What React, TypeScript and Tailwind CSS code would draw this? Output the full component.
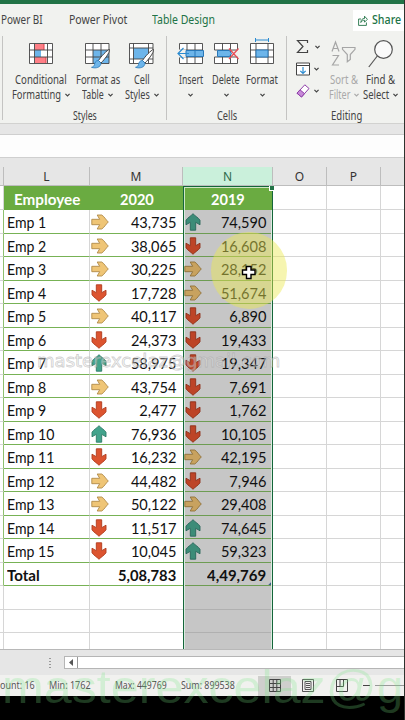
import { useLayoutEffect, useRef, useState, type ReactNode } from "react";

/* One line of text squeezed or stretched to an exact width. */
function Fit({ w, className = "", children }: { w: number; className?: string; children: ReactNode }) {
  const ref = useRef<HTMLSpanElement>(null);
  const [scale, setScale] = useState(1);
  useLayoutEffect(() => {
    if (ref.current) setScale(w / ref.current.offsetWidth);
  }, [w]);
  return (
    <span className={"inline-block shrink-0 whitespace-nowrap " + className} style={{ width: w }}>
      <span ref={ref} className="inline-block origin-left" style={{ transform: `scaleX(${scale})` }}>
        {children}
      </span>
    </span>
  );
}

function Chevron({ dim = false }: { dim?: boolean }) {
  return (
    <svg width="5" height="4" viewBox="0 0 5 4" fill="none" stroke={dim ? "#a9a9a9" : "#444"} strokeWidth="1.2">
      <path d="M0.4 0.8 2.5 2.9 4.6 0.8" />
    </svg>
  );
}

function CondIcon() {
  return (
    <svg width="24" height="32" viewBox="0 0 24 32">
      <rect x="0.5" y="5.5" width="23" height="20" fill="#fff" />
      <path d="M6 6h9v6H6zM6 19h11v6H6z" fill="#ff7f86" />
      <path d="M6 12h6v7H6z" fill="#6db5ea" />
      <path d="M15 6v6M17 19v6" stroke="#d9434c" />
      <path d="M.5 5.5h23v20H.5zM5.5 5.5v20M18.500 5.5v20M.5 12h23M.5 19h23" fill="none" stroke="#444" strokeWidth=".9" />
    </svg>
  );
}

function Brush() {
  return (
    <g>
      <path d="M24.500 11.500C22 12 16 18.500 13.500 22.500L16 25C19.500 21.500 25 14.500 24.500 11.500Z" fill="#fff" stroke="#444" />
      <path d="M13.500 22.500c-3 0-3.500 2-4 4-.4 1.500-1.500 2.500-3 2.800 4 1.500 9.500.2 9.500-4.300z" fill="#6db5ea" stroke="#2a78b8" strokeWidth=".8" />
    </g>
  );
}

function TableIcon() {
  return (
    <svg width="26" height="32" viewBox="0 0 26 32">
      <rect x=".5" y="5.5" width="23" height="20" fill="#fff" />
      <path d="M8 12h16v13.500H8z" fill="#6db5ea" />
      <path d="M.5 5.5h23.500v20H.5zM8 5.500v20M16 5.500v20M.5 12H24M.5 19H24" fill="none" stroke="#444" strokeWidth=".9" />
      <Brush />
    </svg>
  );
}

function CellStylesIcon() {
  return (
    <svg width="26" height="32" viewBox="0 0 26 32">
      <rect x=".5" y="5.5" width="23" height="20" fill="#fff" />
      <path d="M4.500 10h15v11h-15z" fill="#6db5ea" />
      <path d="M.5 5.500H24v20H.5zM4.500 5.500v20M19.500 5.500v20M.5 10H24M.5 21H24" fill="none" stroke="#444" strokeWidth=".9" />
      <Brush />
    </svg>
  );
}

function InsertIcon() {
  return (
    <svg width="27" height="32" viewBox="0 0 27 32">
      <path d="M2.500 5.500h23v20h-23zM10 5.500v20M18 5.500v20M2.500 12h23M2.500 19h23" fill="#fff" stroke="#444" strokeWidth=".9" />
      <path d="M0 11.500h9v8H0z" fill="#f1f2ef" />
      <path d="M9 12.500h17.500v6H9z" fill="#6db5ea" stroke="#2a78b8" />
      <path d="M18 12.500v6" stroke="#2a78b8" />
      <path d="M12 15.500H1M6.500 10l-5.500 5.500L6.500 21" fill="none" stroke="#2a8bd0" strokeWidth="1.200" />
    </svg>
  );
}

function DeleteIcon() {
  return (
    <svg width="25" height="32" viewBox="0 0 25 32">
      <path d="M.5 12V5.500h23V12M.5 19v6.500h23V19M8.500 5.500v20M16.500 5.500v20M.5 12h23M.5 19h23" fill="#fff" stroke="#444" strokeWidth=".9" />
      <path d="M3.500 12.500h12l2 3-2 3h-12z" fill="#6db5ea" stroke="#2a78b8" />
      <path d="M15 10.500l9.500 10.500M24.500 10.500L15 21" stroke="#e84e57" strokeWidth="1.300" />
    </svg>
  );
}

function FormatIcon() {
  return (
    <svg width="24" height="32" viewBox="0 0 24 32">
      <path d="M5.500 2h13M5.500 0v4M18.500 0v4" stroke="#2a8bd0" fill="none" />
      <path d="M.5 5.500h23v20H.5zM6 5.500v20M18 5.500v20M.5 12h23M.5 19h23" fill="#fff" stroke="#444" strokeWidth=".9" />
      <path d="M6 12h12v7H6z" fill="#6db5ea" stroke="#2a78b8" />
    </svg>
  );
}

function SortIcon() {
  return (
    <svg width="25" height="32" viewBox="0 0 25 32" fill="none" stroke="#a6a6a6" strokeWidth="1.200">
      <path d="M1 13.500 4.500 4 8 13.500M2.200 10.500h4.600M1.500 17.500h6L1.500 27h6.500" />
      <path d="M11.500 9.500h12.500v1.800l-4.700 5.200v5l-3 2.200v-7.200l-4.800-5.200z" />
    </svg>
  );
}

function FindIcon() {
  return (
    <svg width="26" height="32" viewBox="0 0 26 32" fill="none" stroke="#555" strokeWidth="1.200">
      <circle cx="15.500" cy="11.500" r="8.800" fill="#fafafa" />
      <path d="M9.300 18 .8 29" />
    </svg>
  );
}

interface ToolProps {
  box: string;
  icon: ReactNode;
  top: [string, number];
  bottom?: [string, number];
  dim?: boolean;
}

function Tool({ box, icon, top, bottom, dim = false }: ToolProps) {
  return (
    <div className={"flex shrink-0 flex-col items-center pt-[2px] " + box + (dim ? " text-[#a9a9a9]" : "")}>
      {icon}
      <div className="mt-[2px] flex h-[15px] items-center">
        <Fit w={top[1]}>{top[0]}</Fit>
      </div>
      <div className="flex h-[15px] items-center gap-[4px]">
        {bottom && <Fit w={bottom[1]}>{bottom[0]}</Fit>}
        <Chevron dim={dim} />
      </div>
    </div>
  );
}

function Ribbon() {
  return (
    <div className="flex h-[84px] text-[12px] leading-[15px] text-[#444]">
      <div className="ml-[2px] flex w-[165px] flex-col border-x border-[#c4c4c2]">
        <div className="flex h-[72px] shrink-0 pl-[5px]">
          <Tool box="w-[66px]" icon={<CondIcon />} top={["Conditional", 52]} bottom={["Formatting", 49]} />
          <Tool box="w-[47px]" icon={<TableIcon />} top={["Format as", 44]} bottom={["Table", 22]} />
          <Tool box="w-[41px]" icon={<CellStylesIcon />} top={["Cell", 16]} bottom={["Styles", 25]} />
        </div>
        <div className="flex pl-[70px]"><Fit w={24}>Styles</Fit></div>
      </div>
      <div className="flex w-[120px] flex-col border-r border-[#c4c4c2]">
        <div className="flex h-[72px] shrink-0 pl-[6px]">
          <Tool box="w-[35px]" icon={<InsertIcon />} top={["Insert", 24]} />
          <Tool box="w-[36px]" icon={<DeleteIcon />} top={["Delete", 28]} />
          <Tool box="w-[36px]" icon={<FormatIcon />} top={["Format", 32]} />
        </div>
        <div className="flex pl-[50px]"><Fit w={20}>Cells</Fit></div>
      </div>
      <div className="flex w-[117px] flex-col">
        <div className="flex h-[72px] shrink-0 pl-[9px]">
          <div className="flex w-[29px] shrink-0 flex-col gap-[5px] pt-[2px]">
            <div className="flex h-[17px] items-center gap-[6px]">
              <svg width="13" height="15" viewBox="0 0 13 15" fill="none" stroke="#444" strokeWidth="1.200">
                <path d="M11.500 4V1.500H1.500L7 7.500l-5.500 6h10V11" />
              </svg>
              <Chevron />
            </div>
            <div className="flex h-[17px] items-center gap-[4px]">
              <svg width="14" height="14" viewBox="0 0 14 14" fill="#fff" stroke="#444">
                <path d="M.5 1h13v12H.5zM.5 3.500h13" />
                <path d="M7 5v6.500M4.300 8.800 7 11.500l2.700-2.700" fill="none" stroke="#2a8bd0" strokeWidth="1.200" />
              </svg>
              <Chevron />
            </div>
            <div className="flex h-[17px] items-center gap-[4px]">
              <svg width="14" height="14" viewBox="0 0 14 14" stroke="#8f3fa8">
                <path d="M8.800.8 13 4.500 5.500 13 1 9.200z" fill="#fff" />
                <path d="M4 5.800 8.500 9.600 5.500 13 1 9.200z" fill="#c78ad8" />
              </svg>
              <Chevron />
            </div>
          </div>
          <Tool box="w-[37px]" icon={<SortIcon />} top={["Sort &", 28]} bottom={["Filter", 21]} dim />
          <Tool box="w-[37px]" icon={<FindIcon />} top={["Find &", 29]} bottom={["Select", 26]} />
        </div>
        <div className="flex pl-[44px]"><Fit w={31}>Editing</Fit></div>
      </div>
    </div>
  );
}

type Dir = "up" | "down" | "side";

const turn: Record<Dir, string> = {
  up: "rotate(0 9 9)",
  down: "rotate(180 9 9)",
  side: "rotate(90 9 9)",
};
const fills: Record<Dir, [string, string]> = {
  up: ["#43a38c", "#2c7a66"],
  down: ["#dc5430", "#b03c1e"],
  side: ["#efc576", "#b08a48"],
};
const shaded: Record<Dir, [string, string]> = {
  up: ["#3c8c78", "#28675a"],
  down: ["#bd4427", "#8f3018"],
  side: ["#c8a25f", "#8f7038"],
};

function Arrow({ dir, dark = false }: { dir: Dir; dark?: boolean }) {
  const [fill, stroke] = (dark ? shaded : fills)[dir];
  return (
    <svg width="18" height="18" viewBox="0 0 18 18" className={"shrink-0 " + (dark ? "-ml-px" : dir === "side" ? "ml-px" : "")}>
      <path
        transform={turn[dir]}
        d="M9 .7C11 3 14.800 5 16 7.300V11.800L11.700 9.300V17.200H6.300V9.300L2 11.800V7.300C3.200 5 7 3 9 .7Z"
        fill={fill}
        stroke={stroke}
        strokeWidth=".9"
        strokeLinejoin="round"
      />
    </svg>
  );
}

const rows: [string, Dir, string, Dir, string][] = [
  ["Emp 1", "side", "43,735", "up", "74,590"],
  ["Emp 2", "side", "38,065", "down", "16,608"],
  ["Emp 3", "side", "30,225", "side", "28,152"],
  ["Emp 4", "down", "17,728", "side", "51,674"],
  ["Emp 5", "side", "40,117", "down", "6,890"],
  ["Emp 6", "down", "24,373", "down", "19,433"],
  ["Emp 7", "up", "58,975", "down", "19,347"],
  ["Emp 8", "side", "43,754", "down", "7,691"],
  ["Emp 9", "down", "2,477", "down", "1,762"],
  ["Emp 10", "up", "76,936", "down", "10,105"],
  ["Emp 11", "down", "16,232", "side", "42,195"],
  ["Emp 12", "side", "44,482", "down", "7,946"],
  ["Emp 13", "side", "50,122", "side", "29,408"],
  ["Emp 14", "down", "11,517", "up", "74,645"],
  ["Emp 15", "down", "10,045", "up", "59,323"],
];

const cols = "grid shrink-0 grid-cols-[4px_86px_93px_90px_54px_54px_24px] grid-rows-[100%]";

function Num({ children }: { children: string }) {
  return <span className="ml-auto inline-block origin-right scale-x-[0.94]">{children}</span>;
}

function Blank({ last = false }: { last?: boolean }) {
  return <div className={"border-b border-[#d6d6d6] " + (last ? "" : "border-r")} />;
}

/* Cell of the selected column: green frame, a hairline of white, grey fill. */
function Selected({ children }: { children: ReactNode }) {
  return <div className="flex border-x border-[#14663a] bg-[#dcebe0] px-px">{children}</div>;
}

function Sheet() {
  return (
    <div className="relative h-[463px] overflow-hidden bg-white font-[Lato,'Open_Sans',sans-serif] text-[15.5px] leading-[20px] text-[#111]">
      <div className={cols + " h-[24px] text-[15px] font-bold text-white"}>
        <div className="border-r border-b border-[#d6d6d6]" />
        <div className="flex justify-center bg-[#6aab41] pt-[3px]"><Fit w={66}>Employee</Fit></div>
        <div className="flex justify-center bg-[#6aab41] pt-[3px]"><Fit w={34}>2020</Fit></div>
        <div className="flex justify-center border border-b-0 border-[#14663a] bg-[#6aab41] pt-[2px] shadow-[inset_1px_1px_0_#cfe6c4]">
          <Fit w={34}>2019</Fit>
        </div>
        <Blank /><Blank /><Blank last />
      </div>
      {rows.map(([name, d1, v1, d2, v2]) => (
        <div key={name} className={cols + " h-[23.53px]"}>
          <div className="border-r border-b border-r-[#8fc06f] border-b-[#d6d6d6]" />
          <div className="border-r border-b border-r-[#d6d6d6] border-b-[#77b255] pt-[2px] pl-[3px]">
            <span className="inline-block origin-left scale-x-[0.91]">{name}</span>
          </div>
          <div className="flex items-center border-b border-[#77b255] pt-[2px] pr-[7px]">
            <Arrow dir={d1} />
            <Num>{v1}</Num>
          </div>
          <Selected>
            <div className="flex flex-1 items-center border-b border-[#6d9c52] bg-[#c6c6c6] pt-[2px] pr-[5px]">
              <Arrow dir={d2} dark />
              <Num>{v2}</Num>
            </div>
          </Selected>
          <Blank /><Blank /><Blank last />
        </div>
      ))}
      <div className={cols + " h-[23.53px] font-bold"}>
        <div className="border-r border-b border-r-[#8fc06f] border-b-[#d6d6d6]" />
        <div className="border-r border-b border-r-[#d6d6d6] border-b-[#77b255] pt-[2px] pl-[3px]"><Fit w={33}>Total</Fit></div>
        <div className="flex justify-end border-b border-[#77b255] pt-[2px] pr-[7px]"><Fit w={58}>5,08,783</Fit></div>
        <Selected>
          <div className="flex flex-1 justify-end border-b border-[#6d9c52] bg-[#c6c6c6] pt-[2px]">
            <Fit w={59}>4,49,769</Fit>
            <span className="ml-[2px] h-[3px] w-[3px] self-end bg-[#3b5a8c] [clip-path:polygon(100%_0,100%_100%,0_100%)]" />
          </div>
        </Selected>
        <Blank /><Blank /><Blank last />
      </div>
      {[0, 1, 2].map((i) => (
        <div key={i} className={cols + " h-[23.53px]"}>
          <Blank /><Blank /><div className="border-b border-[#d6d6d6]" />
          <Selected><div className="flex-1 border-b border-[#b0b0b0] bg-[#c6c6c6]" /></Selected>
          <Blank /><Blank /><Blank last />
        </div>
      ))}
      {/* fill handle at the selection corner */}
      <div className="absolute top-0 left-[269px] h-[5px] w-[5px] border-b border-l border-white bg-[#217346]" />
      {/* click highlight and cell cursor */}
      <div className="absolute top-[46px] left-[211px] h-[77px] w-[76px] rounded-full bg-[#ece850]/45" />
      <svg className="absolute top-[79px] left-[241px]" width="16" height="15" viewBox="0 0 16 15">
        <path d="M5.500 1.500h4.500V5h4v4.500h-4v4H5.500v-4h-4V5h4z" fill="#fff" stroke="#000" strokeWidth="1.400" />
      </svg>
      <div className="absolute top-[165px] left-[37px] font-['DejaVu_Sans',sans-serif] text-[17px] text-white/35 [-webkit-text-stroke:0.8px_rgba(160,160,160,0.5)]">
        <Fit w={243}>masterexcelaz@gmail.com</Fit>
      </div>
    </div>
  );
}

function ColumnHeads() {
  const sep = "flex items-center justify-center border-r border-b border-[#bdbdbd] pt-[1px] ";
  return (
    <div className={cols + " h-[19px] text-[12px] leading-[15px] text-[#333]"}>
      <div className={sep} />
      <div className={sep}>L</div>
      <div className={sep}>M</div>
      <div className={sep + "bg-[#caf0db] text-[#2f6b4c]"}>N</div>
      <div className={sep}>O</div>
      <div className={sep}>P</div>
      <div className="border-b border-[#bdbdbd]" />
    </div>
  );
}

function StatusBar() {
  return (
    <div className="flex h-[21px] items-center bg-[#f1f1ef] text-[11px] text-[#555]">
      <Fit w={35}>ount: 16</Fit>
      <Fit w={42} className="ml-[14px]">Min: 1762</Fit>
      <Fit w={52} className="ml-[24px]">Max: 449769</Fit>
      <Fit w={54} className="ml-[14px]">Sum: 899538</Fit>
      <div className="ml-[23px] flex h-[20px] w-[33px] shrink-0 items-center justify-center bg-[#cfcfcd]">
        <svg width="12" height="13" viewBox="0 0 12 13" fill="none" stroke="#444">
          <path d="M.5.5h11v12H.5zM4.200.5v12M7.800.5v12M.5 4.500h11M.5 8.500h11" />
        </svg>
      </div>
      <svg className="ml-[11px] shrink-0" width="12" height="13" viewBox="0 0 12 13" fill="none" stroke="#444">
        <path d="M.5.5h11v12H.5zM3 2.500h6v8H3zM4 4.500h4M4 6.500h4M4 8.500h4" strokeWidth=".9" />
      </svg>
      <svg className="ml-[22px] shrink-0" width="12" height="13" viewBox="0 0 12 13" fill="none" stroke="#444">
        <path d="M.5.5h11v12H.5zM.5 7.500h7V.5M4 .5v7" />
      </svg>
      <div className="ml-[15px] h-px w-[7px] shrink-0 bg-[#444]" />
      <div className="ml-[5px] h-px flex-1 bg-[#999]" />
    </div>
  );
}

export default function App() {
  return (
    <div className="relative flex h-[720px] w-[405px] flex-col overflow-hidden bg-black font-['Noto_Sans','Open_Sans',sans-serif]">
      <div className="flex w-[404px] flex-col overflow-hidden bg-[#e6e6e6]">
        <div className="h-[4px] bg-[#217346]" />
        <div className="flex h-[120px] flex-col border-b border-[#d2d2d0] bg-[#f1f2ef]">
          <div className="flex h-[32px] items-center text-[12.5px] text-[#444]">
            <Fit w={42} className="ml-[1px]">Power BI</Fit>
            <Fit w={58} className="ml-[26px]">Power Pivot</Fit>
            <Fit w={63} className="ml-[25px] text-[#217346]">Table Design</Fit>
            <div className="ml-[138px] flex h-[21px] flex-1 items-center bg-white pl-[5px] font-medium text-[#217346]">
              <svg width="10" height="11" viewBox="0 0 10 11" fill="none" stroke="#217346" strokeWidth=".9">
                <path d="M3 4H.6v6.400h7.800V7.500M2.800 7.500c.2-2.700 1.500-4 3.700-4V1.200L9.400 4.300 6.500 7.200V5.300c-1.600 0-2.800.6-3.700 2.200z" />
              </svg>
              <Fit w={29} className="ml-[4px]">Share</Fit>
            </div>
          </div>
          <Ribbon />
        </div>
        <div className="mt-[10px] h-[24px] border-y border-[#cfcfcf] bg-[#fdfdfd]" />
        <div className="h-[9px]" />
        <ColumnHeads />
        <Sheet />
        <div className="flex h-[26px] items-center border-t border-[#b8b8b8]">
          <div className="ml-[49px] flex flex-col gap-[2px]">
            {[0, 1, 2, 3].map((i) => (
              <span key={i} className="h-px w-[2px] bg-[#999]" />
            ))}
          </div>
          <div className="ml-[13px] flex h-[13px] flex-1 border border-r-0 border-[#b5b5b5] bg-white">
            <div className="flex w-[13px] items-center justify-center border-r border-[#999]">
              <svg width="4" height="7" viewBox="0 0 4 7"><path d="M4 0v7L0 3.500z" fill="#555" /></svg>
            </div>
          </div>
        </div>
        <StatusBar />
      </div>
      <div className="absolute top-0 right-0 h-full w-px bg-[#2e332e]" />
      <div className="absolute top-[659px] left-[2px] flex font-['Liberation_Sans',sans-serif] text-[47px] leading-[55px] text-[#78e682]/25">
        <Fit w={375}>masterexcelaz@</Fit>
        <span>g</span>
      </div>
    </div>
  );
}
